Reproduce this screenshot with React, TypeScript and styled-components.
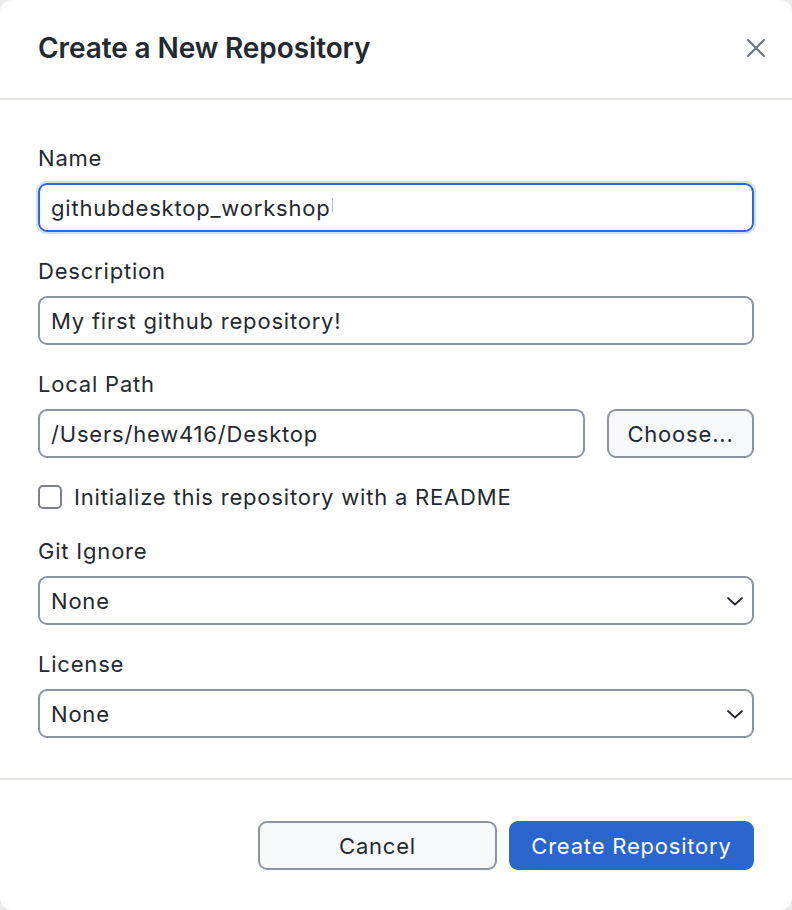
import React from 'react';
import styled, {createGlobalStyle} from 'styled-components';

const Global = createGlobalStyle`
  html, body {
    margin: 0;
    padding: 0;
    background: #ececec;
  }
  * { box-sizing: border-box; }
`;

const Dialog = styled.div`
  width: 792px;
  height: 910px;
  background: #ffffff;
  border-radius: 12px;
  overflow: hidden;
  display: flex;
  flex-direction: column;
  font-family: Inter, "Noto Sans", sans-serif;
  color: #24292f;
`;

const Header = styled.header`
  height: 100px;
  flex-shrink: 0;
  display: flex;
  align-items: center;
  justify-content: space-between;
  padding: 0 24px 2px 38px;
  border-bottom: 2px solid #e1e4e8;
`;

const Title = styled.h1`
  margin: 0;
  font-size: 28px;
  font-weight: 600;
  letter-spacing: -0.1px;
`;

const CloseButton = styled.button`
  border: none;
  background: none;
  padding: 0;
  width: 24px;
  height: 24px;
  display: flex;
  align-items: center;
  justify-content: center;
  color: #6e7781;
`;

const Body = styled.div`
  padding: 45px 38px 40px;
  display: flex;
  flex-direction: column;
  gap: 26px;
  border-bottom: 2px solid #e1e4e8;
`;

const Field = styled.div`
  display: flex;
  flex-direction: column;
  gap: 12px;
`;

const Label = styled.label`
  font-size: 22px;
  letter-spacing: 0.8px;
  line-height: 26px;
`;

const Row = styled.div`
  display: flex;
  gap: 22px;

  > :first-child {
    flex: 1;
  }
`;

const TextInput = styled.div<{ $focused?: boolean }>`
  height: 49px;
  border-radius: 9px;
  border: 2px solid ${p => (p.$focused ? '#2d68d6' : '#8c959f')};
  box-shadow: ${p => (p.$focused ? '0 0 0 2px rgba(45,104,214,0.22)' : 'none')};
  display: flex;
  align-items: center;
  padding: 0 11px;
  font-size: 22px;
  letter-spacing: 0.8px;
`;

const Caret = styled.span`
  display: inline-block;
  width: 1px;
  height: 14px;
  background: #b4b9bf;
  margin-left: 1px;
  margin-top: -6px;
`;

const Button = styled.button<{ $primary?: boolean; $width: number }>`
  width: ${p => p.$width}px;
  height: 49px;
  flex-shrink: 0;
  border-radius: 9px;
  font-family: inherit;
  font-size: 22px;
  letter-spacing: 0.8px;
  border: 2px solid ${p => (p.$primary ? '#2b66cf' : '#8c959f')};
  background: ${p => (p.$primary ? '#2b66cf' : '#f6f8fa')};
  color: ${p => (p.$primary ? '#ffffff' : '#24292f')};
  padding: 0;
`;

const CheckRow = styled.label`
  display: flex;
  align-items: center;
  gap: 12px;
  font-size: 22px;
  letter-spacing: 0.8px;
  margin-top: 0;
  margin-bottom: 2px;
`;

const CheckBox = styled.span`
  width: 24px;
  height: 24px;
  border-radius: 5px;
  border: 2px solid #7b8089;
  background: #fff;
`;

const Select = styled.div`
  height: 49px;
  border-radius: 9px;
  border: 2px solid #8c959f;
  display: flex;
  align-items: center;
  justify-content: space-between;
  padding: 0 7px 0 11px;
  font-size: 22px;
  letter-spacing: 0.8px;
`;

const Footer = styled.footer`
  flex: 1;
  display: flex;
  justify-content: flex-end;
  align-items: flex-start;
  gap: 12px;
  padding: 41px 38px 0;
`;

const Chevron = () => (
  <svg width="20" height="20" viewBox="0 0 20 20" fill="none">
    <path d="M3 7l7 6.5L17 7" stroke="#24292f" strokeWidth="1.8" strokeLinecap="round" strokeLinejoin="round"/>
  </svg>
);

const App = () => {
  return (
    <>
      <Global/>
      <Dialog>
        <Header>
          <Title>Create a New Repository</Title>
          <CloseButton aria-label="Close">
            <svg width="20" height="20" viewBox="0 0 20 20">
              <path d="M2 2l16 16M18 2L2 18" stroke="currentColor" strokeWidth="2.2" strokeLinecap="round"/>
            </svg>
          </CloseButton>
        </Header>
        <Body>
          <Field>
            <Label>Name</Label>
            <TextInput $focused>githubdesktop_workshop<Caret/></TextInput>
          </Field>
          <Field>
            <Label>Description</Label>
            <TextInput>My first github repository!</TextInput>
          </Field>
          <Field>
            <Label>Local Path</Label>
            <Row>
              <TextInput>/Users/hew416/Desktop</TextInput>
              <Button $width={147}>Choose...</Button>
            </Row>
          </Field>
          <CheckRow>
            <CheckBox/>
            Initialize this repository with a README
          </CheckRow>
          <Field>
            <Label>Git Ignore</Label>
            <Select>None<Chevron/></Select>
          </Field>
          <Field>
            <Label>License</Label>
            <Select>None<Chevron/></Select>
          </Field>
        </Body>
        <Footer>
          <Button $width={239}>Cancel</Button>
          <Button $primary $width={245}>Create Repository</Button>
        </Footer>
      </Dialog>
    </>
  );
};

export default App;
